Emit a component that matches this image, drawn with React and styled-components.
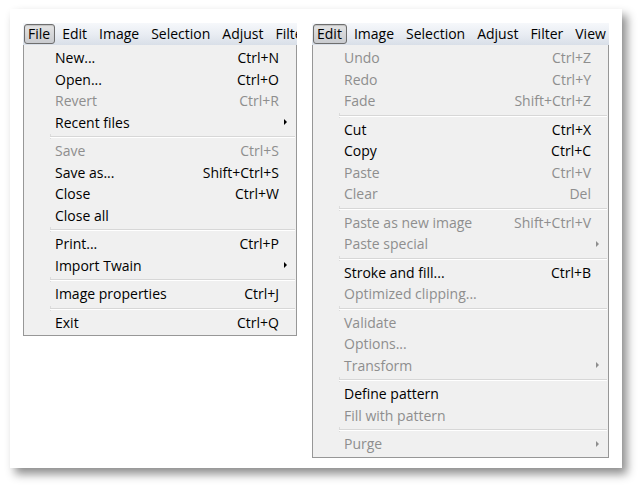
import React from 'react'
import styled, { createGlobalStyle } from 'styled-components'

const GlobalStyle = createGlobalStyle`
  html, body {
    margin: 0;
    padding: 0;
    background: #ffffff;
    font-family: "Open Sans", "Noto Sans", sans-serif;
  }
`

const Page = styled.div`
  width: 640px;
  height: 487px;
  padding: 9px 0 0 10px;
  box-sizing: border-box;
`

const Card = styled.div`
  width: 612px;
  height: 459px;
  background: #ffffff;
  box-shadow: 5px 6px 9px rgba(0, 0, 0, 0.45);
  padding: 14px 13px 0 13px;
  box-sizing: border-box;
  display: flex;
  align-items: flex-start;
  gap: 15px;
`

const MenuColumn = styled.div`
  width: ${p => p.$width}px;
  display: flex;
  flex-direction: column;
`

const MenuBar = styled.div`
  height: 22px;
  display: flex;
  align-items: center;
  padding-left: 1px;
  overflow: hidden;
  white-space: nowrap;
  background: linear-gradient(to bottom, #f6f8fb 0%, #e9edf3 50%, #d9dfe8 100%);
  font-size: 14px;
  color: #000;
`

const BarItem = styled.div`
  flex: none;
  height: 20px;
  line-height: 18px;
  padding: 0 4px 0 3px;
  margin-right: 3px;
  box-sizing: border-box;
  border: 1px solid ${p => (p.$active ? '#6e6e6e' : 'transparent')};
  border-radius: 3px;
  background: ${p => (p.$active ? 'linear-gradient(to bottom, #e4e4e4, #c9cbcf)' : 'transparent')};
  box-shadow: ${p => (p.$active ? 'inset 0 1px 1px rgba(0,0,0,0.15)' : 'none')};
`

const Dropdown = styled.div`
  background: #f0f0f0;
  border: 1px solid #979797;
  border-top: none;
  padding: 2px 0 2px 0;
`

const Row = styled.div`
  height: 21.5px;
  display: flex;
  align-items: center;
  padding: 0 9px 0 31px;
  font-size: 14px;
  white-space: nowrap;
  color: ${p => (p.$disabled ? '#8e8e8e' : '#000000')};
`

const Label = styled.span`
  flex: 1;
`

const Shortcut = styled.span`
  text-align: right;
  margin-right: 8px;
`

const Arrow = styled.span`
  width: 0;
  height: 0;
  border-top: 3px solid transparent;
  border-bottom: 3px solid transparent;
  border-left: 3px solid ${p => (p.$disabled ? '#8e8e8e' : '#000000')};
`

const Separator = styled.div`
  position: relative;
  height: 7px;
  margin-left: 26px;
  margin-right: 1px;
  &::after {
    content: '';
    position: absolute;
    left: 0;
    right: 0;
    top: 3px;
    height: 1px;
    background: #d7d7d7;
    border-bottom: 1px solid #ffffff;
  }
  &::before {
    content: '';
    position: absolute;
    left: 0;
    top: 1px;
    width: 1px;
    height: 5px;
    background: #dcdcdc;
  }
`

const fileMenu = [
  { label: 'New...', key: 'Ctrl+N' },
  { label: 'Open...', key: 'Ctrl+O' },
  { label: 'Revert', key: 'Ctrl+R', disabled: true },
  { label: 'Recent files', sub: true },
  'sep',
  { label: 'Save', key: 'Ctrl+S', disabled: true },
  { label: 'Save as...', key: 'Shift+Ctrl+S' },
  { label: 'Close', key: 'Ctrl+W' },
  { label: 'Close all' },
  'sep',
  { label: 'Print...', key: 'Ctrl+P' },
  { label: 'Import Twain', sub: true },
  'sep',
  { label: 'Image properties', key: 'Ctrl+J' },
  'sep',
  { label: 'Exit', key: 'Ctrl+Q' },
]

const editMenu = [
  { label: 'Undo', key: 'Ctrl+Z', disabled: true },
  { label: 'Redo', key: 'Ctrl+Y', disabled: true },
  { label: 'Fade', key: 'Shift+Ctrl+Z', disabled: true },
  'sep',
  { label: 'Cut', key: 'Ctrl+X' },
  { label: 'Copy', key: 'Ctrl+C' },
  { label: 'Paste', key: 'Ctrl+V', disabled: true },
  { label: 'Clear', key: 'Del', disabled: true },
  'sep',
  { label: 'Paste as new image', key: 'Shift+Ctrl+V', disabled: true },
  { label: 'Paste special', sub: true, disabled: true },
  'sep',
  { label: 'Stroke and fill...', key: 'Ctrl+B' },
  { label: 'Optimized clipping...', disabled: true },
  'sep',
  { label: 'Validate', disabled: true },
  { label: 'Options...', disabled: true },
  { label: 'Transform', sub: true, disabled: true },
  'sep',
  { label: 'Define pattern' },
  { label: 'Fill with pattern', disabled: true },
  'sep',
  { label: 'Purge', sub: true, disabled: true },
]

function Menu({ width, bar, active, items }) {
  return (
    <MenuColumn $width={width}>
      <MenuBar>
        {bar.map(b => (
          <BarItem key={b} $active={b === active}>{b}</BarItem>
        ))}
      </MenuBar>
      <Dropdown>
        {items.map((it, i) =>
          it === 'sep' ? (
            <Separator key={i} />
          ) : (
            <Row key={i} $disabled={it.disabled}>
              <Label>{it.label}</Label>
              {it.sub ? <Arrow $disabled={it.disabled} /> : <Shortcut>{it.key}</Shortcut>}
            </Row>
          )
        )}
      </Dropdown>
    </MenuColumn>
  )
}

export default function App() {
  return (
    <>
      <GlobalStyle />
      <Page>
        <Card>
          <Menu
            width={274}
            bar={['File', 'Edit', 'Image', 'Selection', 'Adjust', 'Filter']}
            active="File"
            items={fileMenu}
          />
          <Menu
            width={297}
            bar={['Edit', 'Image', 'Selection', 'Adjust', 'Filter', 'View']}
            active="Edit"
            items={editMenu}
          />
        </Card>
      </Page>
    </>
  )
}
